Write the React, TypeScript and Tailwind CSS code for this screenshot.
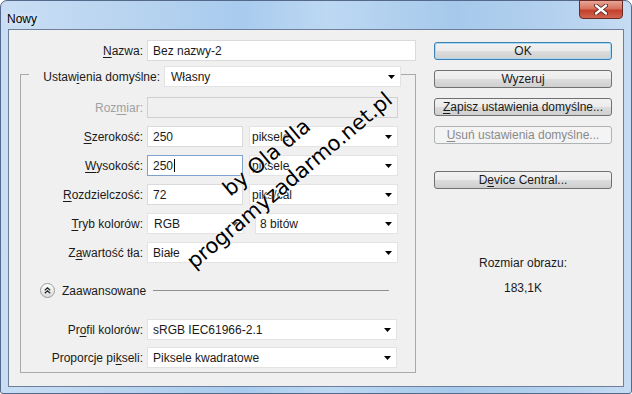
import React from 'react';

const font = "font-['Liberation_Sans',Arial,sans-serif]";

function Arrow() {
  return (
    <svg width="7" height="4" viewBox="0 0 7 4" className="shrink-0">
      <polygon points="0,0 7,0 3.5,4" fill="#000" />
    </svg>
  );
}

function Select({ value, className = '' }: { value: string; className?: string }) {
  return (
    <div className={`flex items-center h-[21px] bg-white border border-[#e3e3e3] pr-[5px] ${className}`}>
      <span className="flex-1 truncate">{value}</span>
      <Arrow />
    </div>
  );
}

function Field({ value, className = '', focused = false }: { value: string; className?: string; focused?: boolean }) {
  return (
    <div
      className={`flex items-center h-[21px] bg-white border pl-[5px] ${
        focused ? 'border-[#7da2ce]' : 'border-[#dadada]'
      } ${className}`}
    >
      <span>{value}</span>
      {focused && <span className="w-px h-[13px] bg-black ml-px" />}
    </div>
  );
}

function Row({ label, children, muted = false }: { label: React.ReactNode; children: React.ReactNode; muted?: boolean }) {
  return (
    <div className="flex items-center h-[21px]">
      <div className={`w-[114px] text-right ${muted ? 'text-[#a0a0a0]' : ''}`}>{label}</div>
      <div className="ml-[4px] flex items-center">{children}</div>
    </div>
  );
}

function Btn({ children, primary = false, disabled = false }: { children: React.ReactNode; primary?: boolean; disabled?: boolean }) {
  let cls = 'border-[#707070] bg-[linear-gradient(#f2f2f2_0%,#ebebeb_50%,#dddddd_50%,#cfcfcf_100%)]';
  if (primary)
    cls = 'border-[#3c7fb1] bg-[linear-gradient(#f2f2f2_0%,#ebebeb_50%,#dddddd_50%,#cfcfcf_100%)] shadow-[inset_0_0_0_1px_#a8daf5]';
  if (disabled) cls = 'border-[#adb2b5] bg-[#f4f4f4] text-[#8a8a8a]';
  return (
    <div className={`h-[18px] w-full rounded-[3px] border flex items-center justify-center leading-none ${cls}`}>
      {children}
    </div>
  );
}

const U = ({ children }: { children: React.ReactNode }) => <span className="underline underline-offset-2">{children}</span>;

export default function App() {
  return (
    <div className={`w-[632px] h-[394px] flex flex-col rounded-t-[7px] rounded-b-[3px] border border-[#55698a] bg-[linear-gradient(90deg,#c9def4_0%,#b9d4f0_20%,#a8cbee_38%,#bdd8f3_52%,#a6c9eb_72%,#b4d1ef_88%,#c6dcf2_100%)] text-[12px] text-[#1a1a1a] ${font}`}>
      {/* title bar */}
      <div className="h-[28px] flex items-start justify-between pl-[6px] pr-[8px]">
        <span className="mt-[9px] text-[12px] text-black [text-shadow:0_0_6px_#ffffff]">Nowy</span>
        <div className="w-[44px] h-[19px] -mt-px rounded-b-[4px] border border-[#6a2b26] bg-[linear-gradient(#e8a596_0%,#d7735f_45%,#c4402c_55%,#d0654e_100%)] flex items-center justify-center">
          <svg width="14" height="11" viewBox="0 0 14 11">
            <path d="M2 1.5 L12 9.5 M12 1.5 L2 9.5" stroke="#4a1c18" strokeWidth="4" strokeLinecap="round" />
            <path d="M2 1.5 L12 9.5 M12 1.5 L2 9.5" stroke="#ffffff" strokeWidth="2.4" strokeLinecap="round" />
          </svg>
        </div>
      </div>

      {/* client area */}
      <div className="relative mx-[7px] h-[358px] border border-[#6d7f99] bg-[#f0f0f0] flex">
        {/* left column */}
        <div className="w-[407px] flex flex-col pt-[10px]">
          <div className="flex items-center h-[21px]">
            <div className="w-[134px] text-right">
              <U>N</U>azwa:
            </div>
            <Field value="Bez nazwy-2" className="ml-[4px] w-[269px]" />
          </div>

          <fieldset className="ml-[11px] w-[396px] border border-[#a9a9a9] pl-[8px] pb-[4px]">
            <legend className="pt-[5px]">
              <div className="flex items-center h-[21px]">
                <div className="w-[131px] text-right">
                  Ustaw<U>i</U>enia domyślne:
                </div>
                <Select value="Własny" className="ml-[4px] w-[237px] pl-[6px]" />
              </div>
            </legend>

            <div className="mt-[10px] flex flex-col gap-[8px]">
              <Row muted label={<>Roz<U>m</U>iar:</>}>
                <div className="h-[21px] w-[251px] border border-[#d0d0d0]" />
              </Row>
              <Row label={<><U>S</U>zerokość:</>}>
                <Field value="250" className="w-[96px]" />
                <Select value="piksele" className="ml-[6px] w-[149px] pl-[2px]" />
              </Row>
              <Row label={<><U>W</U>ysokość:</>}>
                <Field value="250" focused className="w-[96px]" />
                <Select value="piksele" className="ml-[6px] w-[149px] pl-[2px]" />
              </Row>
              <Row label={<><U>R</U>ozdzielczość:</>}>
                <Field value="72" className="w-[96px]" />
                <Select value="piks/cal" className="ml-[6px] w-[149px] pl-[2px]" />
              </Row>
              <Row label={<><U>T</U>ryb kolorów:</>}>
                <Select value="RGB" className="w-[97px] pl-[6px]" />
                <Select value="8 bitów" className="ml-[11px] w-[143px] pl-[4px]" />
              </Row>
              <Row label={<>Z<U>a</U>wartość tła:</>}>
                <Select value="Białe" className="w-[251px] pl-[5px]" />
              </Row>
            </div>

            <div className="mt-[20px] h-[15px] flex items-center">
              <div className="ml-[11px] w-[15px] h-[15px] rounded-full border border-[#9a9a9a] bg-[linear-gradient(#ffffff,#dcdcdc)] flex items-center justify-center">
                <svg width="7" height="7" viewBox="0 0 7 7">
                  <path d="M0.8 3.2 L3.5 0.8 L6.2 3.2 M0.8 6.2 L3.5 3.8 L6.2 6.2" stroke="#222" strokeWidth="1.2" fill="none" />
                </svg>
              </div>
              <span className="ml-[7px]">Zaawansowane</span>
              <div className="ml-[7px] w-[236px] h-px bg-[#8f8f8f]" />
            </div>

            <div className="mt-[21px] flex flex-col gap-[7px]">
              <Row label={<>Pr<U>o</U>fil kolorów:</>}>
                <Select value="sRGB IEC61966-2.1" className="w-[250px] pl-[5px]" />
              </Row>
              <Row label={<>Proporcje pi<U>k</U>seli:</>}>
                <Select value="Piksele kwadratowe" className="w-[250px] pl-[5px]" />
              </Row>
            </div>
          </fieldset>
        </div>

        {/* right column */}
        <div className="ml-[18px] w-[178px] pt-[12px] flex flex-col">
          <div className="flex flex-col gap-[10px]">
            <Btn primary>OK</Btn>
            <Btn>Wyzeruj</Btn>
            <Btn>
              <U>Z</U>apisz ustawienia domyślne...
            </Btn>
            <Btn disabled>
              <U>U</U>suń ustawienia domyślne...
            </Btn>
          </div>
          <div className="mt-[27px]">
            <Btn>
              D<U>e</U>vice Central...
            </Btn>
          </div>
          <div className="mt-[67px] text-center leading-[15px]">Rozmiar obrazu:</div>
          <div className="mt-[10px] text-center leading-[15px]">183,1K</div>
        </div>

        {/* watermark */}
        <div className="pointer-events-none absolute inset-0 font-['DejaVu_Sans',sans-serif] text-[21px] text-black [text-shadow:0_0_2px_#ffffff,0_0_2px_#ffffff]">
          <span className="absolute left-[258px] top-[128px] -translate-x-1/2 -translate-y-1/2 -rotate-[40deg] whitespace-nowrap">
            by Ola dla
          </span>
          <span className="absolute left-[281px] top-[151px] -translate-x-1/2 -translate-y-1/2 -rotate-[40deg] whitespace-nowrap">
            programyzadarmo.net.pl
          </span>
        </div>
      </div>
    </div>
  );
}
